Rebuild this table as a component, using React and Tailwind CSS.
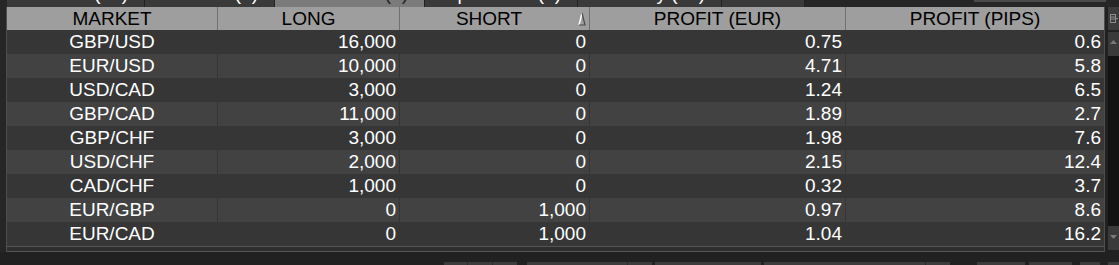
import React from "react";

const tabs = [
  { label: "Orders (12)", w: "w-[138px]", active: false },
  { label: "Alerts (3)", w: "w-[130px]", active: false },
  { label: "Trades (9)", w: "w-[150px]", active: true },
  { label: "Open positions (2)", w: "w-[153px]", active: false },
  { label: "History (15)", w: "w-[144px]", active: false },
  { label: "", w: "w-[83px]", active: false },
];

const rows = [
  ["GBP/USD", "16,000", "0", "0.75", "0.6"],
  ["EUR/USD", "10,000", "0", "4.71", "5.8"],
  ["USD/CAD", "3,000", "0", "1.24", "6.5"],
  ["GBP/CAD", "11,000", "0", "1.89", "2.7"],
  ["GBP/CHF", "3,000", "0", "1.98", "7.6"],
  ["USD/CHF", "2,000", "0", "2.15", "12.4"],
  ["CAD/CHF", "1,000", "0", "0.32", "3.7"],
  ["EUR/GBP", "0", "1,000", "0.97", "8.6"],
  ["EUR/CAD", "0", "1,000", "1.04", "16.2"],
];

const cols = "grid grid-cols-[211px_182px_190px_256px_258px]";

function SortArrow() {
  return (
    <svg width="8" height="14" viewBox="0 0 8 14" className="shrink-0">
      <path d="M4 1 L1 13" stroke="#ffffff" strokeWidth="1.4" fill="none" />
      <path d="M4 1 L7 13 L1 13" stroke="#4a4a4a" strokeWidth="1.2" fill="none" />
    </svg>
  );
}

function ScrollBar() {
  return (
    <div className="w-[11px] flex flex-col">
      <div className="h-[23px] bg-[#3c3c3c] flex items-center justify-center">
        <svg width="8" height="9" viewBox="0 0 8 9">
          <rect x="0.5" y="0.5" width="5" height="8" fill="none" stroke="#8a8a8a" />
          <path d="M1 3 H5 M1 5 H5 M6 4.5 H8" stroke="#8a8a8a" />
        </svg>
      </div>
      <div className="h-[2px]" />
      <div className="h-[24px] bg-[#3a3a3a] flex justify-center pt-[8px]">
        <svg width="7" height="4" viewBox="0 0 7 4">
          <path d="M0 4 L3.5 0 L7 4 Z" fill="#7a7a7a" />
        </svg>
      </div>
      <div className="h-[170px] bg-[#121212]" />
      <div className="h-[24px] bg-[#3a3a3a] flex justify-center pt-[9px]">
        <svg width="7" height="4" viewBox="0 0 7 4">
          <path d="M0 0 L3.5 4 L7 0 Z" fill="#7a7a7a" />
        </svg>
      </div>
    </div>
  );
}

export default function App() {
  return (
    <div className="w-[1119px] h-[265px] overflow-hidden bg-[#212121] font-['Liberation_Sans',Arial,sans-serif] flex flex-col">
      {/* tab strip, only the bottom edge is on screen */}
      <div className="h-[7px] flex bg-[#262626] overflow-hidden">
        <div className="w-[7px]" />
        {tabs.map((t, i) => (
          <div
            key={i}
            className={`${t.w} border-r border-[#222] flex justify-end pr-[16px] overflow-hidden ${
              t.active ? "bg-[#7b7b7b] text-[#222]" : "bg-[#3a3a3a] text-white"
            }`}
          >
            <span className="text-[19px] leading-[19px] -mt-[16px] whitespace-nowrap">{t.label}</span>
          </div>
        ))}
        <div className="flex-1" />
        <div className="w-[132px] h-[2px] bg-[#4a4a4a] mr-[13px]" />
      </div>

      <div className="flex">
        <div className="w-[6px] bg-[#262626]" />
        <div className="w-[1099px] flex flex-col border-l border-r border-[#4e4e4e]">
          {/* header */}
          <div className={`${cols} h-[23px] bg-[#9e9e9e] text-black text-[19px] leading-[23px]`}>
            <div className="text-center border-r border-[#707070]">MARKET</div>
            <div className="text-center border-r border-[#707070]">LONG</div>
            <div className="flex items-center border-r border-[#707070] pr-[3px]">
              <span className="flex-1 text-center">SHORT</span>
              <SortArrow />
            </div>
            <div className="text-center border-r border-[#707070]">PROFIT (EUR)</div>
            <div className="text-center">PROFIT (PIPS)</div>
          </div>

          {/* rows */}
          {rows.map((r, i) => (
            <div
              key={r[0]}
              className={`${cols} h-[24px] text-white text-[19px] leading-[24px] ${
                i % 2 === 0 ? "bg-[#363636]" : "bg-[#424242]"
              }`}
            >
              <div className="text-center border-r border-[#363636]">{r[0]}</div>
              <div className="text-right pr-[3px] border-r border-[#363636]">{r[1]}</div>
              <div className="text-right pr-[3px] border-r border-[#363636]">{r[2]}</div>
              <div className="text-right pr-[3px] border-r border-[#363636]">{r[3]}</div>
              <div className="text-right pr-[3px]">{r[4]}</div>
            </div>
          ))}

          {/* footer strip */}
          <div className="h-[6px] bg-[#2e2e2e] border-t border-b border-[#555]" />
        </div>
        <div className="w-[3px]" />
        <ScrollBar />
      </div>

      {/* bottom toolbar, mostly below the fold */}
      <div className="flex-1 flex items-end">
        <div className="h-[3px] flex w-full">
          <div className="w-[444px]" />
          <div className="w-[73px] bg-[#3c3c3c] flex">
            <div className="w-[24px] border-r border-[#2a2a2a]" />
            <div className="w-[25px] border-r border-[#2a2a2a]" />
          </div>
          <div className="w-[10px]" />
          <div className="w-[125px] bg-[#3c3c3c] flex">
            <div className="w-[101px] border-r border-[#2a2a2a]" />
          </div>
          <div className="w-[3px]" />
          <div className="w-[106px] bg-[#3c3c3c]" />
          <div className="w-[3px]" />
          <div className="w-[186px] bg-[#3c3c3c] flex">
            <div className="w-[162px] border-r border-[#2a2a2a]" />
          </div>
          <div className="w-[27px]" />
          <div className="w-[48px] bg-[#3c3c3c]" />
          <div className="w-[4px]" />
          <div className="w-[43px] bg-[#3c3c3c]" />
          <div className="w-[8px]" />
          <div className="w-[20px] bg-[#3c3c3c]" />
          <div className="w-[8px]" />
          <div className="w-[11px] bg-[#3c3c3c]" />
        </div>
      </div>
    </div>
  );
}
